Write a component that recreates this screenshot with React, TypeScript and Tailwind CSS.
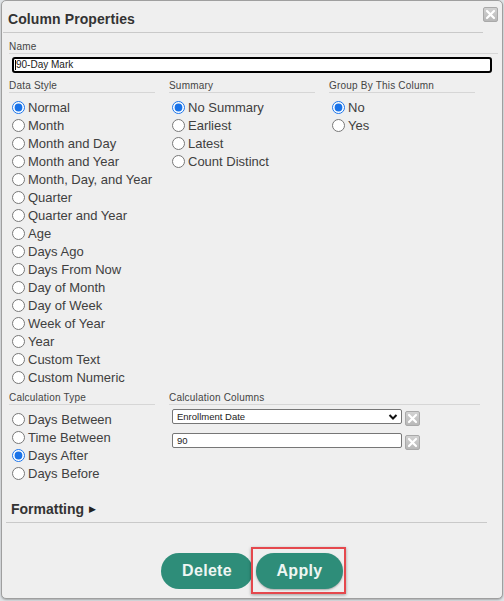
import React from "react";

const dataStyles = [
  "Normal",
  "Month",
  "Month and Day",
  "Month and Year",
  "Month, Day, and Year",
  "Quarter",
  "Quarter and Year",
  "Age",
  "Days Ago",
  "Days From Now",
  "Day of Month",
  "Day of Week",
  "Week of Year",
  "Year",
  "Custom Text",
  "Custom Numeric",
];
const summaries = ["No Summary", "Earliest", "Latest", "Count Distinct"];
const groupBy = ["No", "Yes"];
const calcTypes = ["Days Between", "Time Between", "Days After", "Days Before"];

function SectionLabel({ children }: { children: React.ReactNode }) {
  return (
    <div className="text-[10px] leading-[12px] text-[#444] border-b border-[#d6d6d6] tracking-[0.2px]">
      {children}
    </div>
  );
}

function RadioList({
  name,
  items,
  checked,
}: {
  name: string;
  items: string[];
  checked: string;
}) {
  return (
    <div className="mt-[5px] flex flex-col">
      {items.map((it) => (
        <label key={it} className="h-[18px] flex items-center pl-[3px]">
          <input
            type="radio"
            name={name}
            defaultChecked={it === checked}
            className="m-0 w-[13px] h-[13px] accent-[#1a73e8]"
          />
          <span className="ml-[3px] text-[13px] leading-[15px] text-[#404040] whitespace-nowrap">
            {it}
          </span>
        </label>
      ))}
    </div>
  );
}

function XBox({ className = "" }: { className?: string }) {
  return (
    <span
      className={
        "flex items-center justify-center w-[15px] h-[15px] rounded-[2px] border border-[#a9a9a9] bg-gradient-to-b from-[#d2d2d2] to-[#b8b8b8] " +
        className
      }
    >
      <svg width="11" height="11" viewBox="0 0 11 11">
        <path
          d="M2 2 L9 9 M9 2 L2 9"
          stroke="#ffffff"
          strokeWidth="2.2"
          strokeLinecap="round"
        />
      </svg>
    </span>
  );
}

export default function App() {
  return (
    <div
      className="w-[504px] h-[601px] bg-[#dfe3e6] pt-0"
      style={{ fontFamily: '"Liberation Sans", Arial, sans-serif' }}
    >
      <div className="relative ml-[1px] w-[502px] h-[599px] bg-[#efefef] border border-[#9f9f9f] rounded-[5px] shadow-[0_1px_2px_rgba(0,0,0,0.25)]">
        {/* Header */}
        <div className="ml-[1px] mr-[19px] h-[32px] pt-[10px] pl-[5px] border-b border-[#c9c9c9]">
          <div className="text-[14px] leading-[16px] font-bold text-[#333] tracking-[0.1px]">
            Column Properties
          </div>
        </div>
        <button className="absolute top-[6px] right-[4px]">
          <XBox />
        </button>

        {/* Body */}
        <div className="pl-[7px] pr-[4px]">
          <div className="mt-[8px]">
            <SectionLabel>Name</SectionLabel>
          </div>
          <div className="mt-[3px] ml-[3px] mr-[6px] h-[16px] border-2 border-black rounded-[3px] bg-white flex items-center">
            <span className="w-px h-[10px] bg-black ml-[1px]" />
            <span className="text-[10px] leading-[12px] text-[#222]">
              90-Day Mark
            </span>
          </div>

          <div className="mt-[7px] flex gap-[14px]">
            <div className="w-[146px]">
              <SectionLabel>Data Style</SectionLabel>
              <RadioList name="ds" items={dataStyles} checked="Normal" />
            </div>
            <div className="w-[146px]">
              <SectionLabel>Summary</SectionLabel>
              <RadioList name="sum" items={summaries} checked="No Summary" />
            </div>
            <div className="w-[146px]">
              <SectionLabel>Group By This Column</SectionLabel>
              <RadioList name="grp" items={groupBy} checked="No" />
            </div>
          </div>

          <div className="mt-[6px] flex gap-[14px]">
            <div className="w-[146px]">
              <SectionLabel>Calculation Type</SectionLabel>
              <RadioList name="ct" items={calcTypes} checked="Days After" />
            </div>
            <div className="w-[311px]">
              <SectionLabel>Calculation Columns</SectionLabel>
              <div className="mt-[4px] flex items-start pl-[3px]">
                <div className="w-[230px] h-[15px] bg-white border border-[#767676] rounded-[2px] flex items-center justify-between pl-[4px] pr-[3px]">
                  <span className="text-[9.5px] leading-[11px] text-[#222]">
                    Enrollment Date
                  </span>
                  <svg width="10" height="8" viewBox="0 0 10 8">
                    <path
                      d="M1.5 2 L5 5.5 L8.5 2"
                      fill="none"
                      stroke="#111"
                      strokeWidth="2"
                    />
                  </svg>
                </div>
                <XBox className="ml-[3px] mt-[2px]" />
              </div>
              <div className="mt-[7px] flex items-start pl-[3px]">
                <div className="w-[230px] h-[15px] bg-white border border-[#767676] rounded-[2px] flex items-center pl-[4px]">
                  <span className="text-[9.5px] leading-[11px] text-[#222]">
                    90
                  </span>
                </div>
                <XBox className="ml-[3px] mt-[2px]" />
              </div>
            </div>
          </div>

          <div className="mt-[19px] -ml-[3px] mr-[11px] pl-[5px] pb-[5px] border-b border-[#c9c9c9] flex items-center">
            <span className="text-[14px] leading-[16px] font-bold text-[#333]">
              Formatting
            </span>
            <span className="ml-[5px] text-[9px] leading-[16px] text-[#222]">
              ▶
            </span>
          </div>
        </div>

        <div className="mt-[30px] flex justify-center gap-[3px]">
          <button className="w-[92px] h-[36px] rounded-full bg-[#2e8d79] text-[#eef6f3] text-[16px] font-bold tracking-[0.3px]">
            Delete
          </button>
          <div className="relative">
            <button className="w-[87px] h-[36px] rounded-full bg-[#2e8d79] text-[#eef6f3] text-[16px] font-bold tracking-[0.3px] shadow-[0_1px_2px_rgba(0,0,0,0.3)]">
              Apply
            </button>
            <span className="absolute -left-[5px] -top-[6px] -right-[3px] -bottom-[5px] border-2 border-[#e5484d] shadow-[0_1px_3px_rgba(0,0,0,0.35)] pointer-events-none" />
          </div>
        </div>
      </div>
    </div>
  );
}
